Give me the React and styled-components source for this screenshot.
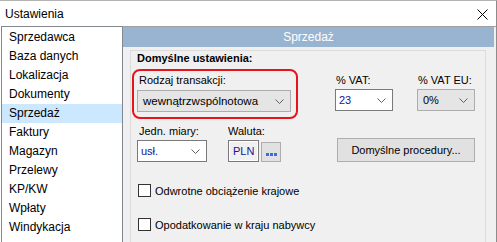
import React from 'react';
import styled, { createGlobalStyle } from 'styled-components';

const GlobalStyle = createGlobalStyle`
  html, body {
    margin: 0;
    padding: 0;
    background: #ffffff;
  }
  body {
    font-family: "Liberation Sans", Arial, sans-serif;
    overflow: hidden;
  }
`;

const Window = styled.div`
  width: 497px;
  height: 242px;
  box-sizing: border-box;
  border-top: 1px solid #b4b4b4;
  border-right: 1px solid #8c8c8c;
  background: #ffffff;
  display: flex;
  flex-direction: column;
  overflow: hidden;
`;

const TitleBar = styled.div`
  height: 25px;
  flex-shrink: 0;
  display: flex;
  align-items: center;
  justify-content: space-between;
  padding: 0 8px 0 5px;
  font-size: 12px;
  color: #000;
`;

const CloseIcon = styled.svg`
  width: 11px;
  height: 11px;
  margin-top: 1px;
`;

const Body = styled.div`
  flex: 1;
  display: flex;
  min-height: 0;
`;

const NavList = styled.ul`
  list-style: none;
  margin: 0 0 0 1px;
  padding: 1px 0 0 0;
  width: 122px;
  box-sizing: border-box;
  border: 1px solid #828790;
  border-bottom: none;
  background: #ffffff;
`;

const NavItem = styled.li`
  height: 19px;
  line-height: 19px;
  padding-left: 7px;
  font-size: 12px;
  color: #000;
  background: ${(p) => (p.$active ? '#cce8ff' : 'transparent')};
`;

const Main = styled.div`
  flex: 1;
  background: #f0f0f0;
  border-top: 1px solid #a0a0a0;
  display: flex;
  flex-direction: column;
`;

const Header = styled.div`
  height: 20px;
  margin-right: 2px;
  background: #99b4d1;
  color: #ffffff;
  font-size: 12px;
  line-height: 20px;
  text-align: center;
`;

const Panel = styled.div`
  margin: 3px 0 0 7px;
  width: 356px;
  flex: 1;
  box-sizing: border-box;
  border: 1px solid #dcdcdc;
  border-bottom: none;
  font-size: 11px;
  color: #000;
`;

const PanelTitle = styled.div`
  height: 15px;
  line-height: 15px;
  margin-left: 6px;
  font-weight: bold;
`;

const Row = styled.div`
  display: flex;
  align-items: flex-start;
  margin-top: ${(p) => p.$top || 0}px;
`;

const Highlight = styled.div`
  margin-left: 1px;
  width: 166px;
  height: 50px;
  box-sizing: border-box;
  border: 2px solid #e8141b;
  border-radius: 8px;
  padding: 2px 0 0 3px;
`;

const Field = styled.div`
  display: flex;
  flex-direction: column;
  gap: ${(p) => p.$gap ?? 2}px;
  margin-left: ${(p) => p.$left || 0}px;
  margin-top: ${(p) => p.$top || 0}px;
`;

const Label = styled.div`
  height: 14px;
  line-height: 14px;
  padding-left: ${(p) => p.$indent ?? 1}px;
  white-space: nowrap;
`;

const Select = styled.div`
  width: ${(p) => p.$w}px;
  height: 22px;
  box-sizing: border-box;
  border: 1px solid ${(p) => (p.$plain ? '#7a7a7a' : '#adadad')};
  background: ${(p) => (p.$plain ? '#ffffff' : '#e5e5e5')};
  display: flex;
  align-items: center;
  justify-content: space-between;
  padding: 0 6px 0 ${(p) => (p.$plain ? 3 : 5)}px;
  font-size: ${(p) => p.$fs || 11}px;
  color: ${(p) => (p.$plain ? '#14149b' : '#000')};
`;

const Chevron = styled.svg`
  width: 9px;
  height: 5px;
  flex-shrink: 0;
`;

const CurrencyGroup = styled.div`
  display: flex;
  align-items: flex-start;
  gap: 2px;
`;

const CurrencyBox = styled.div`
  width: 31px;
  height: 22px;
  box-sizing: border-box;
  border: 1px solid #7a7a7a;
  box-shadow: inset 0 0 0 1px #ffffff;
  background: #f0f0f0;
  padding-left: 4px;
  line-height: 20px;
  font-size: 11px;
  color: #14149b;
`;

const DotsButton = styled.div`
  margin-top: 2px;
  width: 20px;
  height: 20px;
  box-sizing: border-box;
  border: 1px solid #adadad;
  background: #e1e1e1;
  display: flex;
  align-items: flex-end;
  justify-content: center;
  gap: 1px;
  padding-bottom: 5px;
`;

const Dot = styled.span`
  width: 3px;
  height: 3px;
  background: #3a6fd8;
`;

const Button = styled.div`
  margin-left: ${(p) => p.$left || 0}px;
  margin-top: ${(p) => p.$top || 0}px;
  width: 138px;
  height: 24px;
  box-sizing: border-box;
  border: 1px solid #adadad;
  background: #e1e1e1;
  text-align: center;
  line-height: 22px;
  font-size: 11px;
  color: #000;
`;

const CheckRow = styled.label`
  display: flex;
  align-items: center;
  gap: 4px;
  margin: ${(p) => p.$top}px 0 0 7px;
  height: 13px;
`;

const Box = styled.span`
  width: 13px;
  height: 13px;
  box-sizing: border-box;
  border: 1px solid #333333;
  background: #ffffff;
  flex-shrink: 0;
`;

const ChevronDown = () => (
  <Chevron viewBox="0 0 9 5">
    <path d="M0.5 0.5 L4.5 4.5 L8.5 0.5" fill="none" stroke="#606060" strokeWidth="1" />
  </Chevron>
);

const navItems = [
  'Sprzedawca',
  'Baza danych',
  'Lokalizacja',
  'Dokumenty',
  'Sprzedaż',
  'Faktury',
  'Magazyn',
  'Przelewy',
  'KP/KW',
  'Wpłaty',
  'Windykacja',
];

const App = () => {
  return (
    <>
      <GlobalStyle />
      <Window>
        <TitleBar>
          <span>Ustawienia</span>
          <CloseIcon viewBox="0 0 11 11">
            <path d="M0.5 0.5 L10.5 10.5 M10.5 0.5 L0.5 10.5" stroke="#000" strokeWidth="1" />
          </CloseIcon>
        </TitleBar>
        <Body>
          <NavList>
            {navItems.map((item) => (
              <NavItem key={item} $active={item === 'Sprzedaż'}>
                {item}
              </NavItem>
            ))}
          </NavList>
          <Main>
            <Header>Sprzedaż</Header>
            <Panel>
              <PanelTitle>Domyślne ustawienia:</PanelTitle>
              <Row $top={3}>
                <Highlight>
                  <Field $gap={3}>
                    <Label $indent={2}>Rodzaj transakcji:</Label>
                    <Select $w={154} $fs={11.5}>
                      wewnątrzwspólnotowa
                      <ChevronDown />
                    </Select>
                  </Field>
                </Highlight>
                <Field $left={37} $top={4} $gap={2}>
                  <Label>% VAT:</Label>
                  <Select $w={58} $plain>
                    23
                    <ChevronDown />
                  </Select>
                </Field>
                <Field $left={24} $top={4} $gap={2}>
                  <Label>% VAT EU:</Label>
                  <Select $w={58}>
                    0%
                    <ChevronDown />
                  </Select>
                </Field>
              </Row>
              <Row $top={5}>
                <Field $left={6} $gap={2}>
                  <Label $indent={2}>Jedn. miary:</Label>
                  <Select $w={70} $plain>
                    usł.
                    <ChevronDown />
                  </Select>
                </Field>
                <Field $left={21} $gap={2}>
                  <Label $indent={0}>Waluta:</Label>
                  <CurrencyGroup>
                    <CurrencyBox>PLN</CurrencyBox>
                    <DotsButton>
                      <Dot />
                      <Dot />
                      <Dot />
                    </DotsButton>
                  </CurrencyGroup>
                </Field>
                <Button $left={56} $top={14}>Domyślne procedury...</Button>
              </Row>
              <CheckRow $top={22}>
                <Box />
                Odwrotne obciążenie krajowe
              </CheckRow>
              <CheckRow $top={21}>
                <Box />
                Opodatkowanie w kraju nabywcy
              </CheckRow>
            </Panel>
          </Main>
        </Body>
      </Window>
    </>
  );
};

export default App;
